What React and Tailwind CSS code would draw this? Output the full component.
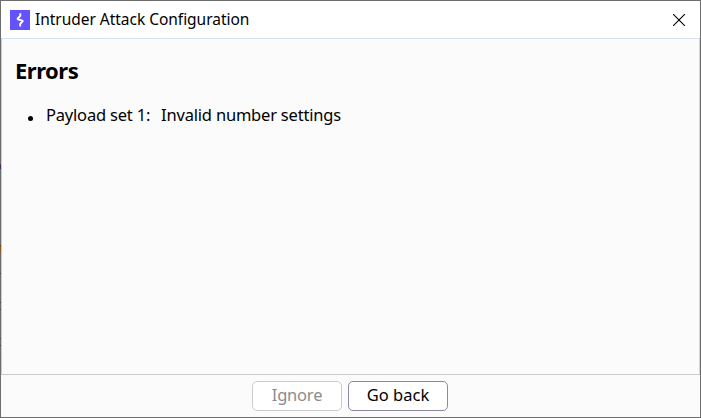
import React from 'react';

function TitleBar() {
  return (
    <header className="flex h-[37px] shrink-0 items-center bg-white pl-[9px] pr-[15px]">
      <svg className="size-5 shrink-0" viewBox="0 0 20 20">
        <rect width="20" height="20" fill="#6353ff" />
        <path d="M10.3 3.2v2.6L7.3 9l5.7 1.9-2.8 2.9v2.8" fill="none" stroke="#fff" strokeWidth="1.9" strokeLinejoin="bevel" />
      </svg>
      <h1 className="ml-[5px] flex-1 whitespace-nowrap pb-px text-[15.5px] leading-5 tracking-[-0.03px]">Intruder Attack Configuration</h1>
      <button aria-label="Close" className="size-3">
        <svg className="size-3" viewBox="0 0 12 12" fill="none" stroke="#000" strokeWidth="1.1">
          <path d="M0 0l12 12M12 0 0 12" />
        </svg>
      </button>
    </header>
  );
}

// Traces of the window behind, showing through the left edge
function LeftEdge() {
  return (
    <div className="flex w-px shrink-0 flex-col bg-[#6d6d6d]">
      <span className="mt-[163px] h-px bg-[#8a3a2a]" />
      <span className="h-1 bg-[#1c3c6c]" />
      <span className="mt-[76px] h-px bg-[#2c3c5c]" />
      <span className="h-[7px] bg-[#8a5a1c]" />
      <span className="mt-[20px] h-px bg-[#444]" />
      <span className="mt-[28px] h-px bg-[#444]" />
      <span className="mt-[6px] h-px bg-[#444]" />
      <span className="mt-[28px] h-px bg-[#444]" />
      <span className="mt-[6px] h-px bg-[#444]" />
    </div>
  );
}

export default function App() {
  return (
    <div className="flex h-[418px] w-[701px] overflow-hidden border border-l-0 border-[#6d6d6d] bg-[#fbfbfb] font-['Noto_Sans','Open_Sans',sans-serif] text-black">
      <LeftEdge />
      <div className="flex flex-1 flex-col">
        <TitleBar />
        <main className="flex-1 border border-t-[#d9e1ea] border-r-[#c9d6e5] border-b-[#cbcbcb] border-l-[#cbcbcb] pl-[13px] pt-[17px]">
          <h2 className="text-[22px] font-bold leading-7 tracking-[-0.5px]">Errors</h2>
          <ul className="mt-[19px] pl-[13px]">
            <li className="flex items-center text-[16.5px] leading-6 tracking-[-0.2px]">
              <span className="mr-[13px] mt-[7px] size-[5px] rounded-full bg-black" />
              <span className="whitespace-pre">Payload set 1:</span>
              <span className="ml-[11px]">Invalid number settings</span>
            </li>
          </ul>
        </main>
        <footer className="flex h-[42px] shrink-0 items-center justify-center gap-1.5 pr-px">
          <button disabled className="h-[30px] w-[90px] rounded-[5px] border border-[#cbcbcb] bg-white pb-[3px] text-[16.5px] leading-[25px] tracking-[-0.2px] text-[#8c8c8c]">Ignore</button>
          <button className="h-[30px] w-[100px] rounded-[5px] border border-[#8d89a0] bg-white pb-[3px] text-[16.5px] leading-[25px]">Go back</button>
        </footer>
      </div>
    </div>
  );
}
